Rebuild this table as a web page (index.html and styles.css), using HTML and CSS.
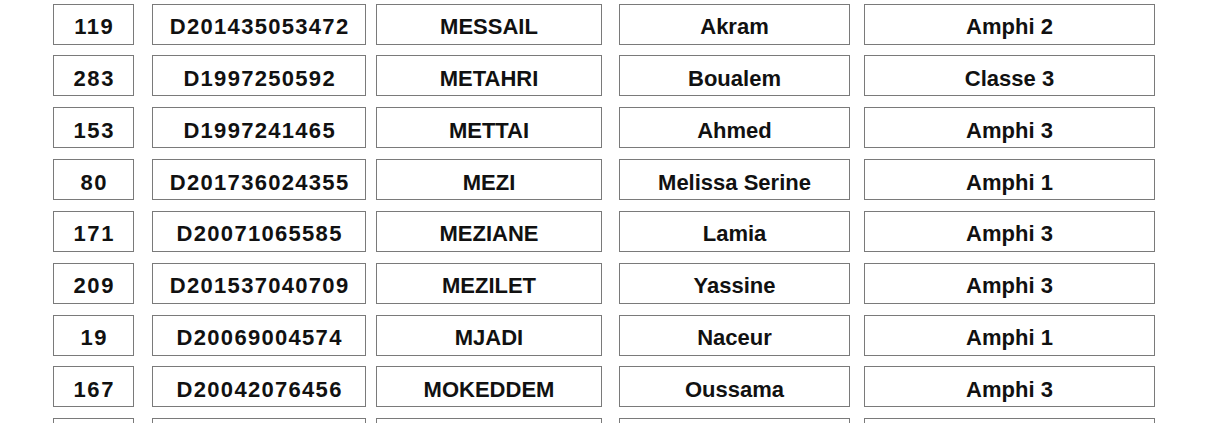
FILE: index.html
```html
<!DOCTYPE html>
<html lang="fr">
<head>
<meta charset="utf-8">
<title>Liste</title>
<link rel="stylesheet" href="styles.css">
</head>
<body>
<div class="list">
  <div class="row"><div class="cell c1">119</div><div class="cell c2">D201435053472</div><div class="cell c3">MESSAIL</div><div class="cell c4">Akram</div><div class="cell c5">Amphi 2</div></div>
  <div class="row"><div class="cell c1">283</div><div class="cell c2">D1997250592</div><div class="cell c3">METAHRI</div><div class="cell c4">Boualem</div><div class="cell c5">Classe 3</div></div>
  <div class="row"><div class="cell c1">153</div><div class="cell c2">D1997241465</div><div class="cell c3">METTAI</div><div class="cell c4">Ahmed</div><div class="cell c5">Amphi 3</div></div>
  <div class="row"><div class="cell c1">80</div><div class="cell c2">D201736024355</div><div class="cell c3">MEZI</div><div class="cell c4">Melissa Serine</div><div class="cell c5">Amphi 1</div></div>
  <div class="row"><div class="cell c1">171</div><div class="cell c2">D20071065585</div><div class="cell c3">MEZIANE</div><div class="cell c4">Lamia</div><div class="cell c5">Amphi 3</div></div>
  <div class="row"><div class="cell c1">209</div><div class="cell c2">D201537040709</div><div class="cell c3">MEZILET</div><div class="cell c4">Yassine</div><div class="cell c5">Amphi 3</div></div>
  <div class="row"><div class="cell c1">19</div><div class="cell c2">D20069004574</div><div class="cell c3">MJADI</div><div class="cell c4">Naceur</div><div class="cell c5">Amphi 1</div></div>
  <div class="row"><div class="cell c1">167</div><div class="cell c2">D20042076456</div><div class="cell c3">MOKEDDEM</div><div class="cell c4">Oussama</div><div class="cell c5">Amphi 3</div></div>
  <div class="row"><div class="cell c1"></div><div class="cell c2"></div><div class="cell c3"></div><div class="cell c4"></div><div class="cell c5"></div></div>
</div>
</body>
</html>
```
FILE: styles.css
```css
html, body {
  margin: 0;
  padding: 0;
  background: #ffffff;
}
body {
  font-family: "Liberation Sans", Arial, Helvetica, sans-serif;
  color: #111111;
  overflow: hidden;
}
.list {
  display: flex;
  flex-direction: column;
  gap: 10.85px;
  padding-top: 3.5px;
}
.row {
  display: flex;
  height: 41px;
}
.cell {
  box-sizing: border-box;
  height: 41px;
  border: 1px solid #7a7a7a;
  display: flex;
  align-items: center;
  justify-content: center;
  padding-top: 6px;
  font-weight: bold;
  font-size: 22px;
  white-space: nowrap;
}
.c1 { margin-left: 53px; width: 81px; letter-spacing: 1.6px; padding-left: 1.6px; }
.c2 { margin-left: 18px; width: 214px; letter-spacing: 1.3px; padding-left: 1.3px; }
.c3 { margin-left: 10px; width: 226px; }
.c4 { margin-left: 17px; width: 231px; }
.c5 { margin-left: 14px; width: 291px; }
```
